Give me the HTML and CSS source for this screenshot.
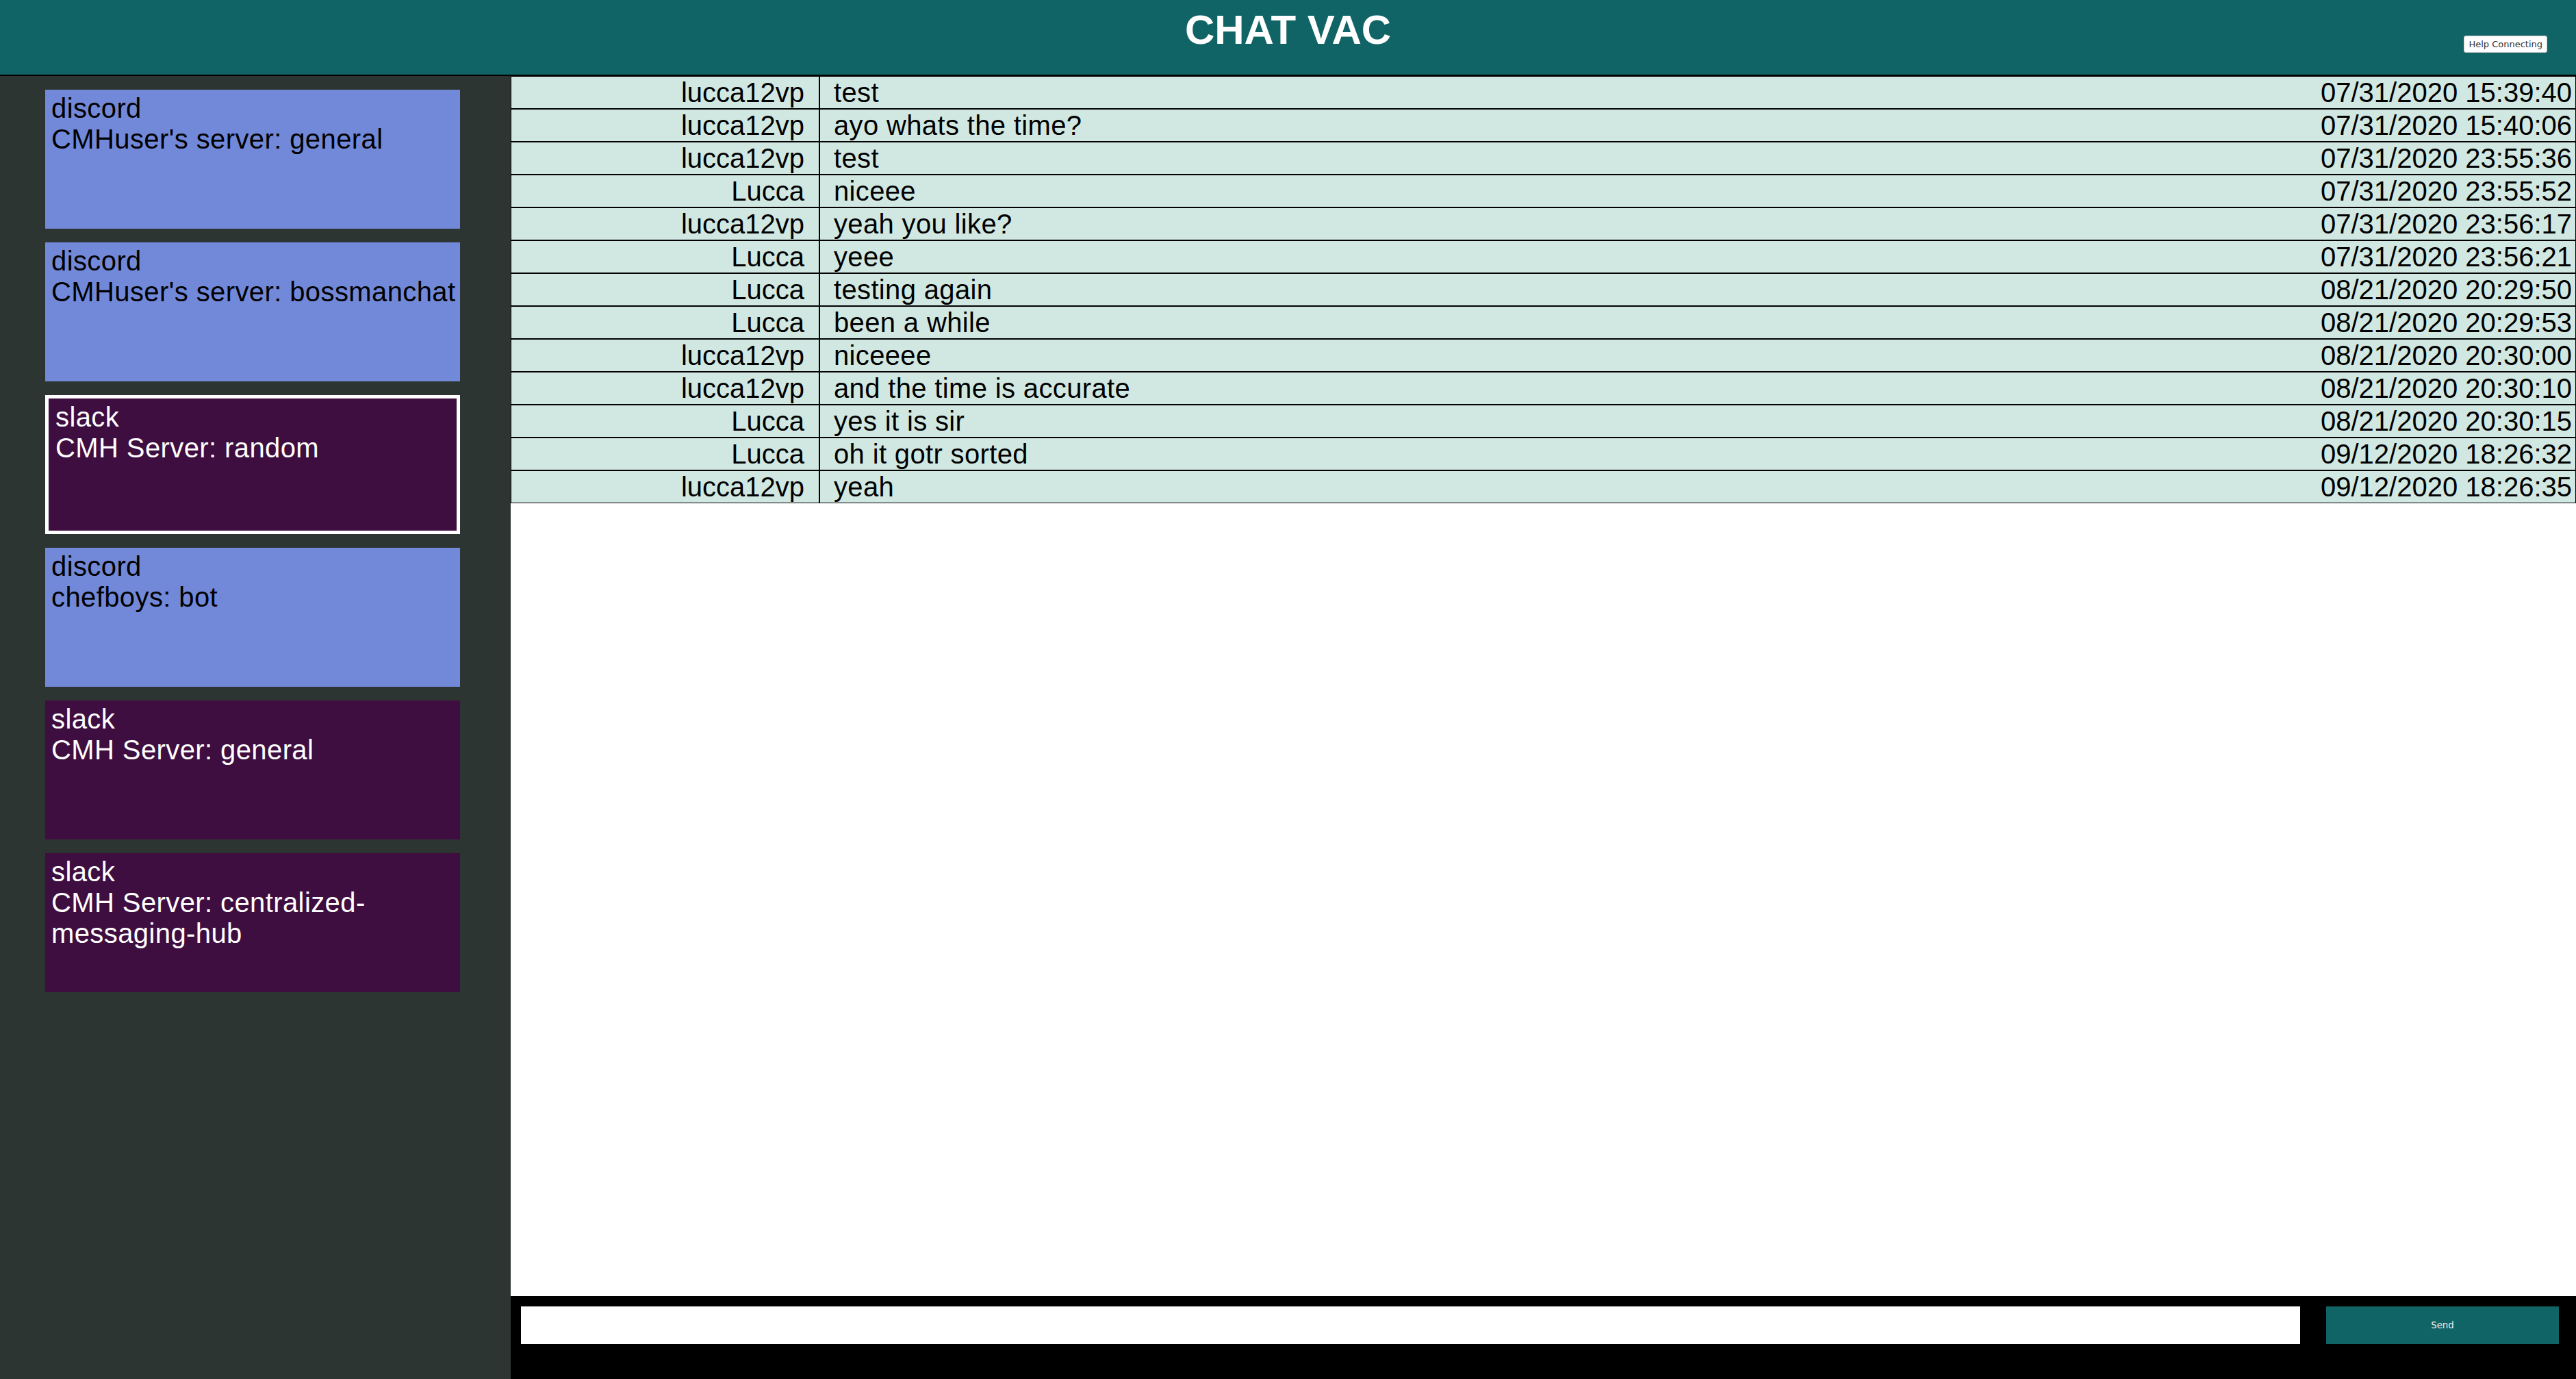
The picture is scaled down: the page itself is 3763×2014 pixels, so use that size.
FILE: index.html
```html
<!DOCTYPE html>
<html lang="en">
<head>
<meta charset="utf-8">
<title>CHAT VAC</title>
<link rel="stylesheet" href="styles.css">
</head>
<body>
<header class="topbar">
  <div class="topbar-side"></div>
  <h1 class="title">CHAT VAC</h1>
  <div class="topbar-side topbar-right">
    <button class="help-btn" type="button">Help Connecting</button>
  </div>
</header>
<div class="app">
  <aside class="sidebar">
    <div class="channel discord">
      <div>discord</div>
      <div>CMHuser's server: general</div>
    </div>
    <div class="channel discord">
      <div>discord</div>
      <div>CMHuser's server: bossmanchat</div>
    </div>
    <div class="channel slack selected">
      <div>slack</div>
      <div>CMH Server: random</div>
    </div>
    <div class="channel discord">
      <div>discord</div>
      <div>chefboys: bot</div>
    </div>
    <div class="channel slack">
      <div>slack</div>
      <div>CMH Server: general</div>
    </div>
    <div class="channel slack">
      <div>slack</div>
      <div>CMH Server: centralized-messaging-hub</div>
    </div>
  </aside>
  <main class="chat">
    <div class="messages">
      <div class="msg"><div class="user">lucca12vp</div><div class="text">test</div><div class="time">07/31/2020 15:39:40</div></div>
      <div class="msg"><div class="user">lucca12vp</div><div class="text">ayo whats the time?</div><div class="time">07/31/2020 15:40:06</div></div>
      <div class="msg"><div class="user">lucca12vp</div><div class="text">test</div><div class="time">07/31/2020 23:55:36</div></div>
      <div class="msg"><div class="user">Lucca</div><div class="text">niceee</div><div class="time">07/31/2020 23:55:52</div></div>
      <div class="msg"><div class="user">lucca12vp</div><div class="text">yeah you like?</div><div class="time">07/31/2020 23:56:17</div></div>
      <div class="msg"><div class="user">Lucca</div><div class="text">yeee</div><div class="time">07/31/2020 23:56:21</div></div>
      <div class="msg"><div class="user">Lucca</div><div class="text">testing again</div><div class="time">08/21/2020 20:29:50</div></div>
      <div class="msg"><div class="user">Lucca</div><div class="text">been a while</div><div class="time">08/21/2020 20:29:53</div></div>
      <div class="msg"><div class="user">lucca12vp</div><div class="text">niceeee</div><div class="time">08/21/2020 20:30:00</div></div>
      <div class="msg"><div class="user">lucca12vp</div><div class="text">and the time is accurate</div><div class="time">08/21/2020 20:30:10</div></div>
      <div class="msg"><div class="user">Lucca</div><div class="text">yes it is sir</div><div class="time">08/21/2020 20:30:15</div></div>
      <div class="msg"><div class="user">Lucca</div><div class="text">oh it gotr sorted</div><div class="time">09/12/2020 18:26:32</div></div>
      <div class="msg"><div class="user">lucca12vp</div><div class="text">yeah</div><div class="time">09/12/2020 18:26:35</div></div>
    </div>
    <form class="composer">
      <input class="composer-input" type="text">
      <button class="send-btn" type="button">Send</button>
    </form>
  </main>
</div>
</body>
</html>
```
FILE: styles.css
```css
* {
  box-sizing: border-box;
}

html, body {
  margin: 0;
  padding: 0;
  height: 100%;
}

body {
  font-family: "Liberation Sans", Arial, sans-serif;
  display: flex;
  flex-direction: column;
  height: 2014px;
  overflow: hidden;
  background: #ffffff;
}

.topbar {
  flex: 0 0 auto;
  height: 111px;
  background: #116466;
  border-bottom: 2px solid #000000;
  display: grid;
  grid-template-columns: 1fr auto 1fr;
}

.title {
  margin: 0;
  padding-top: 9px;
  font-size: 60px;
  font-weight: bold;
  color: #ffffff;
  line-height: normal;
}

.topbar-right {
  display: flex;
  justify-content: flex-end;
  align-items: flex-start;
  padding-top: 52px;
  padding-right: 42px;
}

.help-btn {
  font-family: "DejaVu Sans", sans-serif;
  font-size: 13px;
  color: #333333;
  background: #ffffff;
  border: 1px solid #c8c8c8;
  border-radius: 3px;
  padding: 4px 6px;
  line-height: 15px;
  height: 25px;
}

.app {
  flex: 1 1 auto;
  display: flex;
  min-height: 0;
}

.sidebar {
  flex: 0 0 746px;
  background: #2c3531;
  padding-top: 20px;
  display: flex;
  flex-direction: column;
  gap: 20px;
}

.channel {
  width: 606px;
  height: 203px;
  margin-left: 66px;
  padding: 5px 0 5px 9px;
  font-size: 40px;
  line-height: normal;
  letter-spacing: 0.4px;
}

.discord {
  background: #7289da;
  color: #000000;
}

.slack {
  background: #3f0e40;
  color: #ffffff;
}

.selected {
  border: 5px solid #ffffff;
  padding-left: 10px;
}

.chat {
  flex: 1 1 auto;
  display: flex;
  flex-direction: column;
  min-width: 0;
}

.messages {
  flex: 1 1 auto;
  background: #ffffff;
}

.msg {
  display: flex;
  background: #d1e8e2;
  border: 1px solid #000000;
  font-size: 40px;
  line-height: 46px;
  color: #000000;
}

.user {
  flex: 0 0 451px;
  text-align: right;
  padding-right: 21px;
  border-right: 2px solid #000000;
}

.text {
  flex: 1 1 auto;
  padding-left: 20px;
  letter-spacing: 0.35px;
}

.time {
  flex: 0 0 auto;
  text-align: right;
  padding-right: 5px;
}

.composer {
  flex: 0 0 121px;
  margin: 0;
  background: #000000;
  display: flex;
  align-items: flex-start;
  padding: 15px 25px 0 15px;
  gap: 38px;
}

.composer-input {
  flex: 1 1 auto;
  height: 55px;
  border: none;
  background: #ffffff;
  margin: 0;
  padding: 0 6px;
}

.send-btn {
  flex: 0 0 340px;
  height: 55px;
  border: none;
  margin: 0;
  background: #116466;
  color: #eeeeee;
  font-family: "DejaVu Sans", sans-serif;
  font-size: 13.33px;
}
```
